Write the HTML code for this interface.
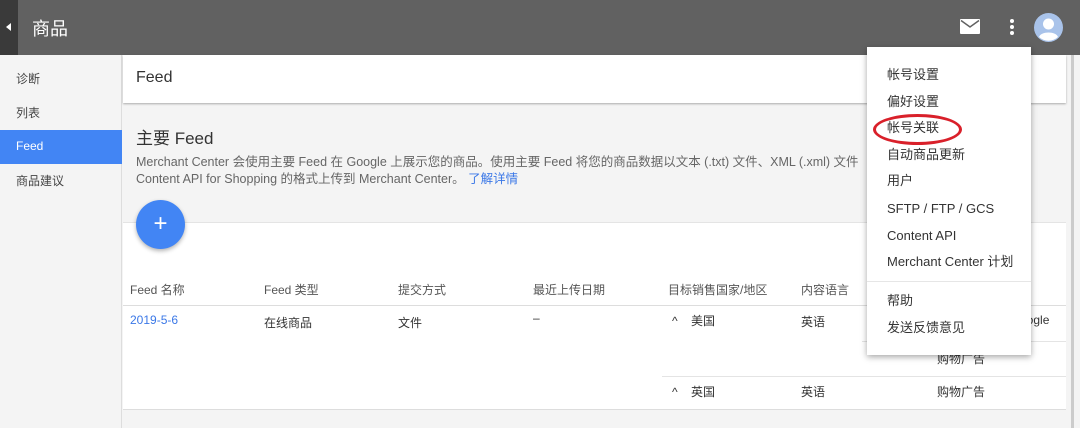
<!DOCTYPE html>
<html><head><meta charset="utf-8"><style>
*{margin:0;padding:0;box-sizing:border-box}
body{width:1080px;height:428px;overflow:hidden;background:#f4f4f4;font-family:"Liberation Sans","Noto Sans CJK SC",sans-serif;position:relative;color:#333}
.a{position:absolute;white-space:nowrap}
.top{left:0;top:0;width:1080px;height:55px;background:#616161}
.back{left:0;top:0;width:18px;height:55px;background:#3a3a3a}
.side{left:0;top:55px;width:122px;height:373px;background:#f4f4f4;border-right:1px solid #ddd}
.si{font-size:12px;color:#444;left:16px}
.menu{left:867px;top:47px;width:164px;height:308px;background:#fff;box-shadow:0 2px 6px rgba(0,0,0,.35)}
.mi{font-size:13px;color:#333;left:887px;line-height:17px}
.th{font-size:12px;color:#555;top:281px}
.td{font-size:12px;color:#333}
</style></head><body>
<div class="a top"></div><div class="a back"></div>
<div class="a" style="left:6px;top:23px;width:0;height:0;border-top:4px solid transparent;border-bottom:4px solid transparent;border-right:5px solid #fff"></div>
<div class="a" style="left:32px;top:15px;font-size:18px;color:#fff">商品</div>
<svg class="a" style="left:960px;top:19px" width="20" height="15" viewBox="0 0 20 15"><rect width="20" height="15" rx="1" fill="#fff"/><path d="M1 1.5L10 8L19 1.5" stroke="#616161" stroke-width="1.5" fill="none"/></svg>
<div class="a" style="left:1010px;top:19px;width:4px;height:4px;background:#fff;border-radius:50%;box-shadow:0 6px #fff,0 12px #fff"></div>
<svg class="a" style="left:1034px;top:13px" width="29" height="29" viewBox="0 0 29 29"><circle cx="14.5" cy="14.5" r="14.5" fill="#a9c3ea"/><circle cx="14.5" cy="11" r="5.5" fill="#fff"/><path d="M5 24c2-6 17-6 19 0a14 14 0 0 1-19 0z" fill="#fff"/></svg>
<div class="a side"></div>
<div class="a si" style="top:70px">诊断</div>
<div class="a si" style="top:104px">列表</div>
<div class="a" style="left:0;top:130px;width:122px;height:34px;background:#4285f4"></div>
<div class="a si" style="top:139px;color:#fff">Feed</div>
<div class="a si" style="top:172px">商品建议</div>
<div class="a" style="left:123px;top:55px;width:943px;height:48px;background:#fff;box-shadow:0 1px 2px rgba(0,0,0,.3)"></div>
<div class="a" style="left:136px;top:69px;font-size:16px;color:#333">Feed</div>
<div class="a" style="left:136px;top:124px;font-size:17px;color:#333">主要 Feed</div>
<div class="a" style="left:136px;top:154px;font-size:12.5px;color:#666;line-height:17px">Merchant Center 会使用主要 Feed 在 Google 上展示您的商品。使用主要 Feed 将您的商品数据以文本 (.txt) 文件、XML (.xml) 文件<br>Content API for Shopping 的格式上传到 Merchant Center。 <span style="color:#3b78e7">了解详情</span></div>
<div class="a" style="left:123px;top:222px;width:943px;height:188px;background:#fff;border-top:1px solid #e4e4e4;border-bottom:1px solid #ddd"></div>
<div class="a" style="left:136px;top:200px;width:49px;height:49px;border-radius:50%;background:#4285f4;box-shadow:0 2px 4px rgba(0,0,0,.3);color:#fff;font-size:24px;text-align:center;line-height:47px">+</div>
<div class="a th" style="left:130px">Feed 名称</div>
<div class="a th" style="left:264px">Feed 类型</div>
<div class="a th" style="left:398px">提交方式</div>
<div class="a th" style="left:533px">最近上传日期</div>
<div class="a th" style="left:668px">目标销售国家/地区</div>
<div class="a th" style="left:801px">内容语言</div>
<div class="a" style="left:123px;top:305px;width:943px;height:1px;background:#ddd"></div>
<div class="a td" style="left:130px;top:313px;color:#3b78e7">2019-5-6</div>
<div class="a td" style="left:264px;top:314px">在线商品</div>
<div class="a td" style="left:398px;top:314px">文件</div>
<div class="a td" style="left:533px;top:311px">–</div>
<div class="a td" style="left:672px;top:312px">^&nbsp;&nbsp;&nbsp;&nbsp;美国</div>
<div class="a td" style="left:801px;top:313px">英语</div>
<div class="a td" style="left:1020px;top:313px">oogle</div>
<div class="a" style="left:862px;top:341px;width:204px;height:1px;background:#e4e4e4"></div>
<div class="a td" style="left:937px;top:350px">购物广告</div>
<div class="a" style="left:662px;top:376px;width:404px;height:1px;background:#e4e4e4"></div>
<div class="a td" style="left:672px;top:383px">^&nbsp;&nbsp;&nbsp;&nbsp;英国</div>
<div class="a td" style="left:801px;top:383px">英语</div>
<div class="a td" style="left:937px;top:383px">购物广告</div>
<div class="a" style="left:1071px;top:55px;width:3px;height:373px;background:#ccc"></div>
<div class="a menu"></div>
<div class="a mi" style="top:66px">帐号设置</div>
<div class="a mi" style="top:93px">偏好设置</div>
<div class="a mi" style="top:119px">帐号关联</div>
<div class="a" style="left:873px;top:114px;width:89px;height:31px;border:3px solid #d9202a;border-radius:50%"></div>
<div class="a mi" style="top:146px">自动商品更新</div>
<div class="a mi" style="top:172px">用户</div>
<div class="a mi" style="top:200px">SFTP / FTP / GCS</div>
<div class="a mi" style="top:227px">Content API</div>
<div class="a mi" style="top:253px">Merchant Center 计划</div>
<div class="a" style="left:867px;top:281px;width:164px;height:1px;background:#e6e6e6"></div>
<div class="a mi" style="top:292px">帮助</div>
<div class="a mi" style="top:319px">发送反馈意见</div>
</body></html>
